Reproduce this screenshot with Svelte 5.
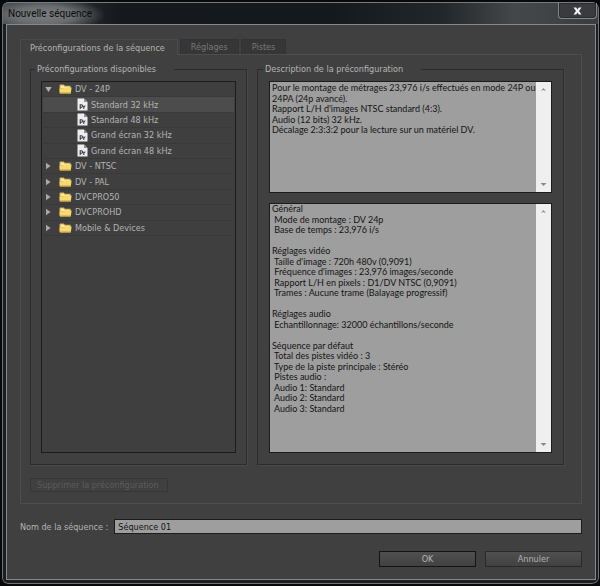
<script lang="ts">
  interface Folder {
    name: string;
    presets: string[];
  }

  const folders: Folder[] = [
    {
      name: 'DV - 24P',
      presets: ['Standard 32 kHz', 'Standard 48 kHz', 'Grand écran 32 kHz', 'Grand écran 48 kHz'],
    },
    { name: 'DV - NTSC', presets: [] },
    { name: 'DV - PAL', presets: [] },
    { name: 'DVCPRO50', presets: [] },
    { name: 'DVCPROHD', presets: [] },
    { name: 'Mobile & Devices', presets: [] },
  ];

  const tabs = ['Préconfigurations de la séquence', 'Réglages', 'Pistes'];

  const description = [
    'Pour le montage de métrages 23,976 i/s effectués en mode 24P ou',
    '24PA (24p avancé).',
    "Rapport L/H d'images NTSC standard (4:3).",
    'Audio (12 bits) 32 kHz.',
    'Décalage 2:3:3:2 pour la lecture sur un matériel DV.',
  ];

  const details = [
    'Général',
    ' Mode de montage : DV 24p',
    ' Base de temps : 23,976 i/s',
    '',
    'Réglages vidéo',
    " Taille d'image : 720h 480v (0,9091)",
    " Fréquence d'images : 23,976 images/seconde",
    ' Rapport L/H en pixels : D1/DV NTSC (0,9091)',
    ' Trames : Aucune trame (Balayage progressif)',
    '',
    'Réglages audio',
    ' Echantillonnage: 32000 échantillons/seconde',
    '',
    'Séquence par défaut',
    ' Total des pistes vidéo : 3',
    ' Type de la piste principale : Stéréo',
    ' Pistes audio :',
    ' Audio 1: Standard',
    ' Audio 2: Standard',
    ' Audio 3: Standard',
  ];

  let activeTab = $state(0);
  let openFolder = $state('DV - 24P');
  let selected = $state('Standard 32 kHz');
  let sequenceName = $state('Séquence 01');
</script>

{#snippet scrollbar()}
  <div class="scrollbar" aria-hidden="true">
    <svg width="7" height="5" viewBox="0 0 7 5"><path d="M1 4 3.5 1 6 4 3.5 3z" fill="#8a8a8a" /></svg>
    <svg width="7" height="5" viewBox="0 0 7 5"><path d="M0.5 1h6L3.5 4z" fill="#8a8a8a" /></svg>
  </div>
{/snippet}

<div class="window">
  <header class="titlebar">
    <h1>Nouvelle séquence</h1>
    <button class="close" aria-label="Fermer">
      <svg width="9" height="8" viewBox="0 0 9 8">
        <path d="M0.5 0.5h2.7L4.5 2.4 5.8 0.5h2.7L6 4l2.5 3.5H5.8L4.5 5.6 3.2 7.5H0.5L3 4z" fill="#f4f4f4" />
      </svg>
    </button>
  </header>

  <main class="client">
    <div class="tabs" role="tablist">
      {#each tabs as tab, i}
        <button
          class="tab"
          class:active={activeTab === i}
          role="tab"
          aria-selected={activeTab === i}
          onclick={() => (activeTab = i)}
        >{tab}</button>
      {/each}
    </div>

    <section class="panel">
      <div class="groups">
        <fieldset>
          <legend>Préconfigurations disponibles</legend>
          <div class="tree">
            <ul>
              {#each folders as folder}
                <li>
                  <button class="row" onclick={() => (openFolder = openFolder === folder.name ? '' : folder.name)}>
                    <svg class="arrow" width="7" height="8" viewBox="0 0 7 8">
                      {#if openFolder === folder.name}
                        <path d="M0.3 2h6.4L3.5 7z" fill="#b0b0b0" />
                      {:else}
                        <path d="M1 0.8v6.4L5.6 4z" fill="#a8a8a8" />
                      {/if}
                    </svg>
                    <svg class="folder" width="13" height="10" viewBox="0 0 13 10">
                      <path d="M0.5 9V1.2L1.2 0.5h3.6L6 1.8h5.6V9z" fill="#d8b04a" />
                      <path d="M1.5 1.5h3L5.6 2.8h5V4h-9z" fill="#fbe9a6" />
                      <path d="M0.6 4.4h3.6l1-0.9H12.6L11.8 9.4H0.9z" fill="#f6d970" />
                      <path d="M1 8.6h10.9L11.7 9.6H1z" fill="#c99a30" />
                    </svg>
                    <span>{folder.name}</span>
                  </button>
                </li>
                {#if openFolder === folder.name}
                  {#each folder.presets as preset}
                    <li>
                      <button class="row preset" class:selected={selected === preset} onclick={() => (selected = preset)}>
                        <svg class="file" width="11" height="13" viewBox="0 0 11 13">
                          <path d="M0.5 0.5h6.6L10.5 4v8.5h-10z" fill="#ededf0" />
                          <path d="M7 0.5V4h3.5z" fill="#8d8d90" />
                          <path d="M3.2 11V6.7h1.2a1.2 1.2 0 0 1 0 2.5H3.2M6.8 11V7.8M6.8 9q0.4-1.1 1.6-1" fill="none" stroke="#3c3645" stroke-width="1.1" />
                        </svg>
                        <span>{preset}</span>
                      </button>
                    </li>
                  {/each}
                {/if}
              {/each}
            </ul>
          </div>
        </fieldset>

        <fieldset>
          <legend>Description de la préconfiguration</legend>
          <div class="texts">
            <div class="textbox summary">
              <div class="lines">
                {#each description as line}<div>{line}</div>{/each}
              </div>
              {@render scrollbar()}
            </div>
            <div class="textbox details">
              <div class="lines">
                {#each details as line}<div>{line}</div>{/each}
              </div>
              {@render scrollbar()}
            </div>
          </div>
        </fieldset>
      </div>

      <button class="delete" disabled>Supprimer la préconfiguration</button>
    </section>

    <div class="name">
      <label for="sequence-name">Nom de la séquence :</label>
      <input id="sequence-name" type="text" bind:value={sequenceName} />
    </div>

    <footer>
      <button class="action default">OK</button>
      <button class="action">Annuler</button>
    </footer>
  </main>
</div>

<style>
  :global(body) {
    background: #08090b;
  }

  * {
    box-sizing: border-box;
  }

  button,
  input {
    font: inherit;
    color: inherit;
    margin: 0;
    padding: 0;
    border: 0;
    border-radius: 0;
    background: none;
  }

  svg {
    display: block;
    flex: none;
  }

  .window {
    display: flex;
    flex-direction: column;
    min-height: 100vh;
    padding: 0 3px 4px 4px;
    border: 2px solid #08090b;
    border-right-width: 1px;
    border-radius: 8px;
    background: #1b1f22;
    box-shadow: inset 0 0 0 1px #6f7375;
    color: #b4b4b4;
    font: 9px/12px "DejaVu Sans Condensed", "DejaVu Sans", sans-serif;
  }

  .titlebar {
    display: flex;
    justify-content: space-between;
    align-items: flex-start;
    height: 22px;
    margin: 0 -2px 0 -3px;
    border-top: 1px solid #777b7d;
    border-radius: 6px 6px 0 0;
    background:
      radial-gradient(ellipse 62px 18px at 40px 12px, #7c7f81 0, #6a6d6f 50%, transparent 100%),
      linear-gradient(90deg, #3c4042 0, #15191d 20%, #14191e 55%, #22272b 74%, #45484a 86%, #3a3d40 100%);
  }

  h1 {
    margin: 0;
    padding: 5px 5px 0;
    color: #0c0c0c;
    font: 10px/12px Roboto, sans-serif;
  }

  .close {
    display: flex;
    justify-content: center;
    align-items: center;
    width: 39px;
    height: 16px;
    margin-right: 1px;
    border: 1px solid #85888a;
    border-top: 0;
    border-radius: 0 0 4px 4px;
    background: #393b3f;
    box-shadow: inset 0 0 0 1px #2a2b2e;
  }

  .client {
    display: flex;
    flex: 1;
    flex-direction: column;
    padding: 14px 13px 12px;
    border: 1px solid #85898b;
    background: #404040;
  }

  .tabs {
    display: flex;
    gap: 2px;
    height: 15px;
  }

  .tab {
    padding: 0 10px;
    border: 1px solid #333;
    border-bottom: 0;
    background: #363636;
    color: #777;
  }

  .tab.active {
    height: 16px;
    padding: 0 12px 0 9px;
    border-color: #4b4b4b;
    background: #404040;
    color: #b4b4b4;
    z-index: 1;
  }

  .panel {
    display: flex;
    flex: 1;
    flex-direction: column;
    padding: 8px 17px 11px 9px;
    border: 1px solid #4d4d4d;
  }

  .groups {
    display: grid;
    flex: 1;
    grid-template-columns: 217fr 307fr;
    gap: 10px;
  }

  fieldset {
    display: flex;
    min-width: 0;
    margin: 0;
    padding: 6px 11px 11px;
    border: 1px solid #2b2b2b;
    box-shadow: 1px 1px 0 #494949;
  }

  fieldset:first-child {
    padding: 6px 10px 11px;
  }

  legend {
    margin-left: -6px;
    padding: 0 18px 0 2px;
  }

  .tree {
    flex: 1;
    padding: 0 1px;
    border: 1px solid #1c1c1c;
    background: #3f3f3f;
  }

  ul {
    display: grid;
    grid-auto-rows: 1fr;
    height: 154px;
    margin: 0;
    padding: 0;
    list-style: none;
  }

  li {
    display: flex;
    border-bottom: 1px solid #393939;
  }

  .row {
    display: flex;
    flex: 1;
    align-items: center;
    padding-left: 2px;
    text-align: left;
  }

  .arrow {
    margin-right: 7px;
  }

  .folder,
  .file {
    margin-right: 3px;
  }

  .preset {
    padding-left: 34px;
  }

  .selected {
    background: #4c4c4c;
  }

  .texts {
    display: flex;
    flex: 1;
    flex-direction: column;
    gap: 10px;
    min-width: 0;
  }

  .textbox {
    display: flex;
    border: 1px solid #1c1c1c;
    background: #9e9e9e;
    color: #141414;
    font-family: Lato, sans-serif;
  }

  .summary {
    height: 112px;
  }

  .details {
    flex: 1;
  }

  .lines {
    display: grid;
    flex: 1;
    grid-auto-rows: 1fr;
    min-width: 0;
    height: 210px;
    padding-left: 2px;
    line-height: 10px;
    white-space: pre;
  }

  .summary .lines {
    height: 54px;
    padding-top: 1px;
  }

  .scrollbar {
    display: flex;
    flex: none;
    flex-direction: column;
    justify-content: space-between;
    align-items: center;
    width: 15px;
    padding: 5px 0;
    background: #efefef;
  }

  .delete {
    align-self: flex-start;
    height: 14px;
    margin-top: 13px;
    padding: 0 8px 0 6px;
    border: 1px solid #363636;
    color: #5c5c5c;
    line-height: 10px;
  }

  .name {
    display: flex;
    align-items: center;
    gap: 6px;
    margin-top: 15px;
  }

  .name input {
    flex: 1;
    min-width: 0;
    height: 15px;
    padding: 0 3px;
    border: 1px solid #1c1c1c;
    background: #9e9e9e;
    color: #141414;
  }

  footer {
    display: flex;
    justify-content: flex-end;
    gap: 9px;
    margin-top: 17px;
  }

  .action {
    width: 97px;
    height: 16px;
    border: 1px solid #2a2a2a;
    background: linear-gradient(#505050, #414141);
  }

  .default {
    border-color: #141414;
  }
</style>
